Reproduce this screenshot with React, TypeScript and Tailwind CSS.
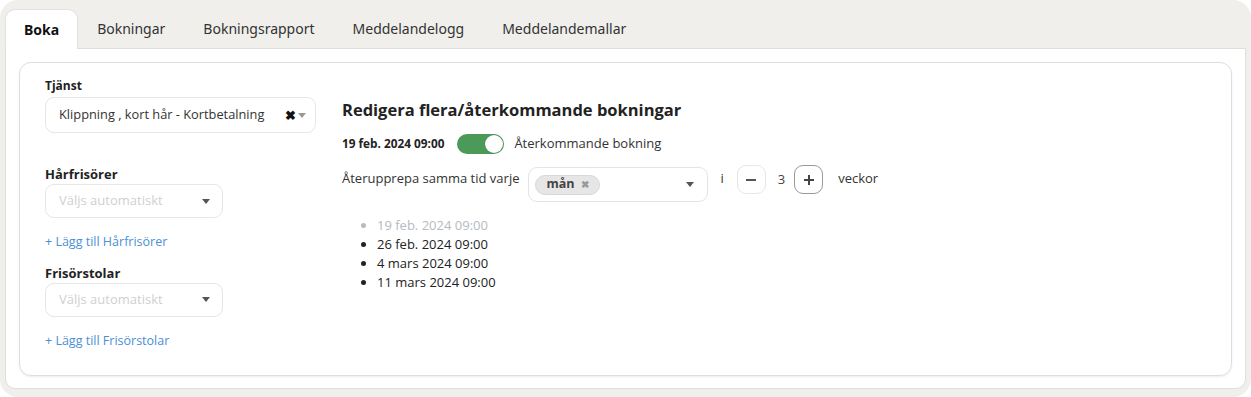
import { useState } from "react";

const tabs = ["Boka", "Bokningar", "Bokningsrapport", "Meddelandelogg", "Meddelandemallar"];
const dates = ["19 feb. 2024 09:00", "26 feb. 2024 09:00", "4 mars 2024 09:00", "11 mars 2024 09:00"];

function Caret({ className = "" }: { className?: string }) {
  return (
    <svg width="8" height="5" viewBox="0 0 8 5" className={className}>
      <path d="M0 0h8L4 5z" fill="currentColor" />
    </svg>
  );
}

function PickSelect({ label, add }: { label: string; add: string }) {
  return (
    <div>
      <div className="text-[13px] font-bold text-[#222] leading-[18px]">{label}</div>
      <div className="mt-[1px] w-[178px] h-[34px] rounded-[9px] border border-[#e6e6e6] flex items-center justify-between pl-[13px] pr-[12px]">
        <span className="text-[13px] text-[#d0d0d0]">Väljs automatiskt</span>
        <Caret className="text-[#555]" />
      </div>
      <div className="mt-[15px] text-[12.5px] text-[#4a8fd6]">+ Lägg till {add}</div>
    </div>
  );
}

export default function App() {
  const [active] = useState(0);
  return (
    <div className="w-[1251px] h-[397px] bg-white font-['Open_Sans',sans-serif] text-[#333]">
      <div className="h-full bg-[#f0efec] rounded-[18px] px-[5px] pt-[8px] pb-[8px] flex flex-col">
        {/* Tabs */}
        <div className="flex h-[40px]">
          {tabs.map((t, i) => (
            <div
              key={t}
              className={
                i === active
                  ? "px-[18px] flex items-center bg-white border border-b-0 border-[#e2e1de] rounded-t-[10px] text-[14px] font-bold text-[#111] font-['Noto_Sans',sans-serif] relative top-[1px]"
                  : "px-[19px] flex items-center text-[14px] text-[#333] font-['Noto_Sans',sans-serif]"
              }
            >
              {t}
            </div>
          ))}
        </div>

        {/* Panel */}
        <div className="flex-1 bg-white border border-[#dfdedb] rounded-b-[10px] px-[13px] pt-[13px] pb-[12px]">
          <div className="h-full border border-[#dedede] rounded-[12px] shadow-[0_1px_2px_rgba(0,0,0,0.08)] flex pl-[25px] pt-[14px]">
            {/* Left column */}
            <div className="w-[297px] flex flex-col">
              <div className="text-[12px] font-bold text-[#222] leading-[18px]">Tjänst</div>
              <div className="mt-[2px] w-[271px] h-[36px] rounded-[9px] border border-[#e6e6e6] flex items-center pl-[13px] pr-[9px]">
                <span className="text-[12.8px] text-[#333] flex-1">Klippning , kort hår - Kortbetalning</span>
                <span className="text-[13px] font-bold text-[#111] leading-none">✖</span>
                <Caret className="ml-[2px] text-[#999]" />
              </div>
              <div className="mt-[32px]">
                <PickSelect label="Hårfrisörer" add="Hårfrisörer" />
              </div>
              <div className="mt-[12px]">
                <PickSelect label="Frisörstolar" add="Frisörstolar" />
              </div>
            </div>

            {/* Right column */}
            <div className="pt-[22px]">
              <h2 className="text-[16.5px] font-bold text-[#222] leading-[22px]">
                Redigera flera/återkommande bokningar
              </h2>
              <div className="mt-[13px] flex items-center h-[20px]">
                <span className="text-[11.8px] font-bold text-[#222]">19 feb. 2024 09:00</span>
                <div className="ml-[13px] w-[47px] h-[20px] rounded-full bg-[#4c9a57] flex items-center justify-end pr-[1px]">
                  <div className="w-[18px] h-[18px] rounded-full bg-white shadow-[0_0_1px_rgba(0,0,0,0.3)]" />
                </div>
                <span className="ml-[10px] text-[13px] text-[#333]">Återkommande bokning</span>
              </div>
              <div className="mt-[13px] flex items-start">
                <span className="text-[13px] leading-[18px] text-[#333] mt-[2px]">Återupprepa samma tid varje</span>
                <div className="ml-[9px] w-[180px] h-[35px] rounded-[9px] border border-[#e4e4e4] flex items-center justify-between pl-[6px] pr-[13px]">
                  <span className="h-[20px] px-[10px] rounded-full bg-[#e6e6e6] border border-[#d8d8d8] flex items-center gap-[6px]">
                    <span className="text-[12.5px] font-bold text-[#444]">mån</span>
                    <span className="text-[10px] text-[#999] font-bold">✖</span>
                  </span>
                  <Caret className="text-[#555]" />
                </div>
                <span className="ml-[12px] text-[13px] leading-[18px] text-[#333] mt-[2px]">i</span>
                <button className="ml-[13px] w-[29px] h-[29px] rounded-[9px] border border-[#e6e6e6] flex items-center justify-center -mt-[2px]">
                  <span className="w-[10px] h-[2px] bg-[#555]" />
                </button>
                <span className="ml-[12px] text-[13px] leading-[18px] text-[#444] mt-[3px]">3</span>
                <button className="ml-[9px] w-[29px] h-[29px] rounded-[9px] border border-[#999] flex items-center justify-center -mt-[2px]">
                  <svg width="10" height="10" viewBox="0 0 10 10">
                    <path d="M5 0v10M0 5h10" stroke="#444" strokeWidth="2" />
                  </svg>
                </button>
                <span className="ml-[15px] text-[13px] leading-[18px] text-[#333] mt-[2px]">veckor</span>
              </div>
              <ul className="mt-[14px] pl-[35px] list-disc text-[13px] leading-[19px]">
                {dates.map((d, i) => (
                  <li key={d} className={i === 0 ? "text-[#b4bbc2] marker:text-[#b4bbc2]" : "text-[#222]"}>
                    {d}
                  </li>
                ))}
              </ul>
            </div>
          </div>
        </div>
      </div>
    </div>
  );
}
